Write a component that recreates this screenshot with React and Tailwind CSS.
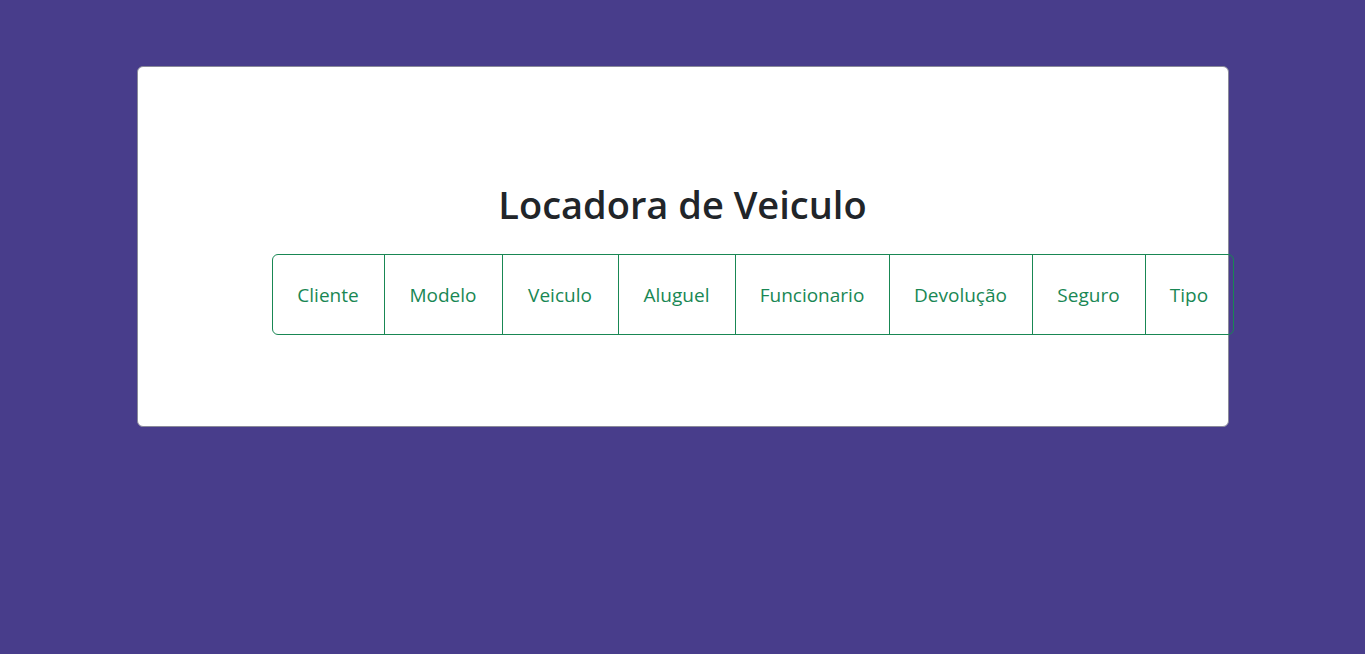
const botoes = [
  { nome: "Cliente", w: "w-[111px]" },
  { nome: "Modelo", w: "w-[118px]" },
  { nome: "Veiculo", w: "w-[116px]" },
  { nome: "Aluguel", w: "w-[117px]" },
  { nome: "Funcionario", w: "w-[154px]" },
  { nome: "Devolução", w: "w-[143px]" },
  { nome: "Seguro", w: "w-[113px]" },
  { nome: "Tipo", w: "w-[88px]" },
];

export default function App() {
  return (
    <div
      className="min-h-[654px] w-full bg-[#483d8b] pt-[66px]"
      style={{ fontFamily: '"Open Sans", "Noto Sans", sans-serif' }}
    >
      <div className="mx-auto w-[1092px] h-[361px] bg-white border border-[#8a8a9a] rounded-[6px]">
        <h1 className="mt-[113px] text-center text-[38px] leading-[48px] font-semibold text-[#212529]">
          Locadora de Veiculo
        </h1>
        <div className="mt-[26px] ml-[134px] flex w-max border border-[#198754] rounded-[6px]">
          {botoes.map((b, i) => (
            <div
              key={b.nome}
              className={`${b.w} h-[79px] pt-[2px] flex items-center justify-center text-[19px] text-[#198754] ${
                i > 0 ? "border-l border-[#198754]" : ""
              }`}
            >
              {b.nome}
            </div>
          ))}
        </div>
      </div>
    </div>
  );
}
